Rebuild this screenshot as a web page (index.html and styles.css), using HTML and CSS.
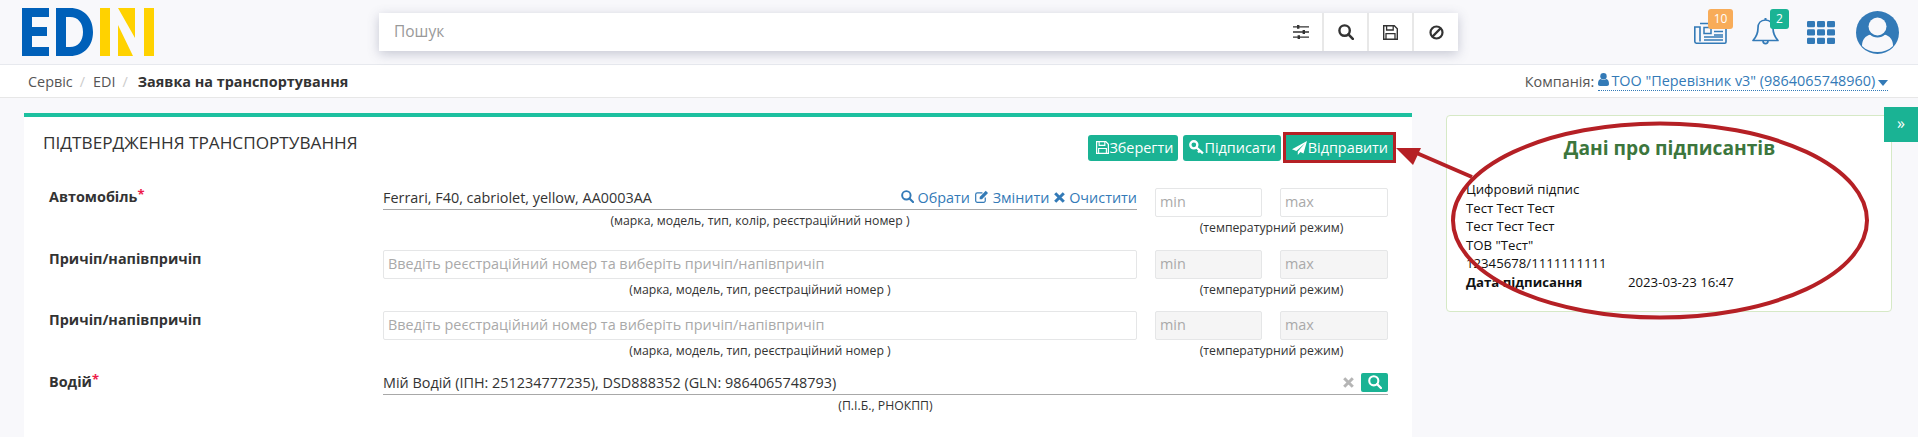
FILE: index.html

```html
<!DOCTYPE html>
<html lang="uk">
<head>
<meta charset="UTF-8">
<title>EDIN - Заявка на транспортування</title>
<link rel="stylesheet" href="styles.css">
</head>
<body>

<header class="topbar">
  <svg class="logo" width="132" height="48" viewBox="0 0 132 48">
    <path fill="#0060b9" d="M0 0h27v9H10v10h15v9H10v11h17v9H0z"/>
    <path fill="#0060b9" fill-rule="evenodd" d="M34 0h14c14 0 23 10 23 24s-9 24-23 24H34zM44 9v30h4c8 0 13-6 13-15S56 9 48 9z"/>
    <path fill="#ffd200" d="M78 0h10v48H78zM96 0h17v30zM96 17l15 31H96zM122 0h10v48h-10z"/>
  </svg>
  <div class="search">
    <span class="search-text">Пошук</span>
    <span class="search-tool first">
      <svg width="16" height="14" viewBox="0 0 16 14"><path fill="#333" d="M0 1.200h16v1.400H0zM0 6.300h16v1.400H0zM0 11.400h16v1.400H0z"/><path fill="#333" d="M4 0h2.400v3.800H4zM9.600 5.100H12v3.800H9.600zM4.600 10.200H7V14H4.600z"/></svg>
    </span>
    <span class="search-tool">
      <svg width="16" height="16" viewBox="0 0 16 16"><circle cx="6.600" cy="6.600" r="5.200" fill="none" stroke="#333" stroke-width="2.400"/><path d="M10.400 10.400l4.400 4.400" stroke="#333" stroke-width="2.600" stroke-linecap="round"/></svg>
    </span>
    <span class="search-tool">
      <svg width="15" height="15" viewBox="0 0 15 15"><path fill="none" stroke="#333" stroke-width="1.400" d="M.7.7h10.600l3 3v10.600H.7z"/><path fill="none" stroke="#333" stroke-width="1.300" d="M3.600 1v4h6.600V1M3 14.200V8.600h9v5.600"/></svg>
    </span>
    <span class="search-tool last">
      <svg width="15" height="15" viewBox="0 0 15 15"><circle cx="7.500" cy="7.500" r="6" fill="none" stroke="#333" stroke-width="2.200"/><path d="M3.400 11.600l8.200-8.200" stroke="#333" stroke-width="2.200"/></svg>
    </span>
  </div>
  <div class="top-icons">
    <span class="top-icon news">
      <svg width="33" height="23" viewBox="0 0 33 23"><path fill="none" stroke="#337ab7" stroke-width="1.600" d="M6 2.500h26v18.500a1.200 1.200 0 0 1-1.200 1.200H2.400A1.600 1.600 0 0 1 .8 20.600V6h5.200v14.500"/><path fill="none" stroke="#337ab7" stroke-width="1.500" d="M10 6.500h7v6h-7z"/><path stroke="#337ab7" stroke-width="1.600" d="M20 7h9M20 10.500h9M20 14h9M10 16h19M10 19h19"/></svg>
      <span class="badge badge-orange">10</span>
    </span>
    <span class="top-icon bell">
      <svg width="27" height="29" viewBox="0 0 27 29"><path fill="none" stroke="#337ab7" stroke-width="1.700" stroke-linejoin="round" d="M13.500 3c-4.800 0-7.500 3.400-7.500 8 0 6-2 9.300-5 12.500h25c-3-3.200-5-6.500-5-12.500 0-4.600-2.700-8-7.500-8zM11 24c0 3.500 5 3.500 5 0"/><path stroke="#337ab7" stroke-width="2" d="M13.500 1v2"/></svg>
      <span class="badge badge-green">2</span>
    </span>
    <svg class="top-grid" width="28" height="23" viewBox="0 0 28 23">
      <g fill="#337ab7">
        <rect width="8" height="6.300" rx="1.300"/><rect x="10" width="8" height="6.300" rx="1.300"/><rect x="20" width="8" height="6.300" rx="1.300"/>
        <rect y="8.300" width="8" height="6.300" rx="1.300"/><rect x="10" y="8.300" width="8" height="6.300" rx="1.300"/><rect x="20" y="8.300" width="8" height="6.300" rx="1.300"/>
        <rect y="16.700" width="8" height="6.300" rx="1.300"/><rect x="10" y="16.700" width="8" height="6.300" rx="1.300"/><rect x="20" y="16.700" width="8" height="6.300" rx="1.300"/>
      </g>
    </svg>
    <svg class="avatar" width="43" height="43" viewBox="0 0 43 43">
      <circle cx="21.500" cy="21.500" r="21.500" fill="#337ab7"/>
      <path fill="#f8f8fb" d="M6 35c0-6 3-10.500 9-11.500h13c6 1 9 5.500 9 11.500-8 8-23 8-31 0z"/>
      <circle cx="21.500" cy="15.500" r="11" fill="#337ab7"/>
      <circle cx="21.500" cy="15.500" r="9" fill="#f8f8fb"/>
    </svg>
  </div>
</header>

<nav class="crumbs">
  <div class="crumb-path">
    <span>Сервіс</span><i>/</i><span>EDI</span><i>/</i><b>Заявка на транспортування</b>
  </div>
  <div class="company">
    <span>Компанія:</span>
    <a class="company-link">
      <svg class="company-user" width="11" height="13" viewBox="0 0 11 13"><circle cx="5.500" cy="3.200" r="3.200" fill="#337ab7"/><path fill="#337ab7" d="M0 11c0-3 1-4.800 2.800-5 1.500 1.200 3.900 1.200 5.400 0C10 6.200 11 8 11 11c0 1.300-.8 2-2 2H2c-1.200 0-2-.7-2-2z"/></svg>
      ТОО "Перевізник v3" (9864065748960)
      <svg class="company-caret" width="10" height="6" viewBox="0 0 10 6"><path fill="#337ab7" d="M0 0h10L5 6z"/></svg>
    </a>
  </div>
</nav>

<main class="content">
  <section class="card">
    <div class="card-head">
      <h2>Підтвердження транспортування</h2>
      <div class="actions">
        <button class="btn btn-save">
          <svg width="13" height="13" viewBox="0 0 15 15"><path fill="none" stroke="#fff" stroke-width="1.400" d="M.7.7h10.600l3 3v10.600H.7z"/><path fill="none" stroke="#fff" stroke-width="1.300" d="M3.600 1v4h6.600V1M3 14.200V8.600h9v5.600"/></svg>Зберегти
        </button>
        <button class="btn btn-sign">
          <svg width="15" height="15" viewBox="0 0 14 14"><circle cx="4.500" cy="4.500" r="3.300" fill="none" stroke="#fff" stroke-width="2.200"/><path d="M7 7l6 5.500M10 10l-1.500 1.700" stroke="#fff" stroke-width="2.200"/></svg>Підписати
        </button>
        <button class="btn btn-marked">
          <svg width="15" height="14" viewBox="0 0 15 14"><path fill="#fff" d="M15 0L0 8.200l4.300 1.700L13 2.200 5.800 10.500V14l2.600-2.900 3.100 1.400z"/></svg>Відправити
        </button>
      </div>
    </div>

    <div class="row">
      <label class="row-label">Автомобіль<sup>*</sup></label>
      <div class="cell">
        <div class="picked">
          <span class="picked-text">Ferrari, F40, cabriolet, yellow, AA0003AA</span>
          <a class="picked-link"><svg width="13" height="13" viewBox="0 0 16 16"><circle cx="6.600" cy="6.600" r="5.200" fill="none" stroke="#337ab7" stroke-width="2.400"/><path d="M10.400 10.400l4.400 4.400" stroke="#337ab7" stroke-width="2.600" stroke-linecap="round"/></svg> Обрати</a>
          <a class="picked-link"><svg width="14" height="13" viewBox="0 0 15 14"><path fill="none" stroke="#337ab7" stroke-width="1.300" d="M11 8v3.500a1.800 1.800 0 0 1-1.800 1.800H2.500A1.800 1.800 0 0 1 .7 11.500V4.800A1.800 1.800 0 0 1 2.500 3H8"/><path fill="#337ab7" d="M5 7.500L11.500.8l2.500 2.400L7.500 10H5z"/></svg> Змінити</a>
          <a class="picked-link"><svg width="11" height="11" viewBox="0 0 11 11"><path stroke="#337ab7" stroke-width="3" d="M1.200 1.200l8.600 8.600M9.800 1.200l-8.600 8.600"/></svg> Очистити</a>
        </div>
        <small class="hint">(марка, модель, тип, колір, реєстраційний номер )</small>
      </div>
      <div class="cell">
        <input class="box" placeholder="min">
        <small class="hint">(температурний режим)</small>
      </div>
      <div class="cell">
        <input class="box" placeholder="max">
      </div>
    </div>

    <div class="row">
      <label class="row-label">Причіп/напівпричіп</label>
      <div class="cell">
        <input class="box" placeholder="Введіть реєстраційний номер та виберіть причіп/напівпричіп">
        <small class="hint">(марка, модель, тип, реєстраційний номер )</small>
      </div>
      <div class="cell">
        <input class="box box-off" placeholder="min">
        <small class="hint">(температурний режим)</small>
      </div>
      <div class="cell">
        <input class="box box-off" placeholder="max">
      </div>
    </div>

    <div class="row">
      <label class="row-label">Причіп/напівпричіп</label>
      <div class="cell">
        <input class="box" placeholder="Введіть реєстраційний номер та виберіть причіп/напівпричіп">
        <small class="hint">(марка, модель, тип, реєстраційний номер )</small>
      </div>
      <div class="cell">
        <input class="box box-off" placeholder="min">
        <small class="hint">(температурний режим)</small>
      </div>
      <div class="cell">
        <input class="box box-off" placeholder="max">
      </div>
    </div>

    <div class="row">
      <label class="row-label">Водій<sup>*</sup></label>
      <div class="cell cell-wide">
        <div class="picked">
          <span class="picked-text">Мій Водій (ІПН: 251234777235), DSD888352 (GLN: 9864065748793)</span>
          <svg class="picked-clear" width="11" height="11" viewBox="0 0 11 11"><path stroke="#b5b5b5" stroke-width="3" d="M1.200 1.200l8.600 8.600M9.800 1.200l-8.600 8.600"/></svg>
          <span class="picked-find"><svg width="14" height="14" viewBox="0 0 16 16"><circle cx="6.600" cy="6.600" r="5.200" fill="none" stroke="#fff" stroke-width="2.400"/><path d="M10.400 10.400l4.400 4.400" stroke="#fff" stroke-width="2.600" stroke-linecap="round"/></svg></span>
        </div>
        <small class="hint">(П.І.Б., РНОКПП)</small>
      </div>
    </div>
  </section>

  <aside class="signers">
    <h3>Дані про підписантів</h3>
    <p>Цифровий підпис</p>
    <p>Тест Тест Тест</p>
    <p>Тест Тест Тест</p>
    <p>ТОВ "Тест"</p>
    <p>12345678/1111111111</p>
    <p class="signed"><b>Дата підписання</b><span>2023-03-23 16:47</span></p>
  </aside>
</main>

<button class="side-tab">»</button>

<svg class="callout" width="1918" height="437" viewBox="0 0 1918 437">
  <ellipse cx="1660" cy="220.500" rx="207" ry="97" fill="none" stroke="#b52025" stroke-width="4"/>
  <path d="M1472 177L1412 151" stroke="#b52025" stroke-width="4"/>
  <path fill="#b52025" d="M1396 148h25l-8 17z"/>
</svg>

</body>
</html>
```

FILE: styles.css

```css
* { box-sizing: border-box; }
html, body { height: 437px; overflow: hidden; }
body { margin: 0; background: #f8f8fb; color: #333; font-family: "Open Sans", sans-serif; font-size: 14.4px; }

.topbar { height: 65px; display: flex; align-items: flex-start; border-bottom: 1px solid #e7e9ee; position: relative; }
.logo { margin: 8px 0 0 22px; flex: none; }
.search { width: 1079px; height: 38px; margin: 13px 0 0 225px; background: #fff; display: flex; box-shadow: 0 3px 12px rgba(80, 85, 120, .3); }
.search-text { flex: 1; padding-left: 15px; font-size: 15.5px; line-height: 37px; color: #999; }
.search-tool { width: 45px; border-left: 2px solid #e8e8e8; display: flex; align-items: center; justify-content: center; }
.search-tool.first { border-left: 0; width: 42px; }
.search-tool.last { width: 46px; }
.top-icons { flex: 1; position: relative; }
.top-icon, .top-grid, .avatar { position: absolute; }
.top-icon.news { left: 236px; top: 21px; }
.top-icon.bell { left: 294px; top: 17px; }
.top-grid { left: 349px; top: 21px; }
.avatar { left: 398px; top: 11px; }
.top-icon svg { display: block; }
.badge { position: absolute; height: 20px; border-radius: 3px; color: #fff; font-size: 12px; line-height: 20px; text-align: center; }
.news .badge { left: 14px; width: 25px; top: -12px; }
.bell .badge { left: 18px; width: 19px; top: -8px; }
.badge-orange { background: #f8ac59; }
.badge-green { background: #1ab394; }

.crumbs { height: 33px; background: #fff; border-bottom: 1px solid #e7e7e7; display: flex; justify-content: space-between; align-items: center; padding: 0 30px 0 28px; }
.crumb-path { color: #555; }
.crumb-path i { font-style: normal; color: #ccc; margin: 0 8px 0 7px; }
.crumb-path b { color: #333; margin-left: 2px; }
.company { display: flex; gap: 4px; color: #555; }
.company-link { color: #337ab7; border-bottom: 1px dotted #337ab7; line-height: 18px; }
.company-user { margin-right: -1.5px; }
.company-caret { margin-left: -1px; }

.content { display: grid; grid-template-columns: 1388px 446px; column-gap: 34px; padding: 15px 0 0 24px; align-items: start; }
.card { background: #fff; border-top: 4px solid #1cc09f; height: 330px; padding: 15px 24px 0 19px; }
.card-head { display: flex; justify-content: space-between; height: 31px; margin-bottom: 25px; }
.card-head h2 { margin: 0; font-size: 17.2px; font-weight: 400; line-height: 21px; text-transform: uppercase; }
.actions { display: flex; align-items: center; gap: 5px; margin-right: -8px; }
.btn { height: 26px; padding: 0 5px 0 7px; border: 0; border-radius: 3px; background: #1ab394; color: #fff; font: 14.4px "Open Sans", sans-serif; display: flex; align-items: center; }
.btn-save { padding-left: 8px; }
.btn-sign { padding: 0 5px 0 6px; }
.btn-marked { height: 31px; margin-left: -3px; border: 3px solid #b52025; border-radius: 0; padding: 0 5px 0 6px; gap: 1px; }

.row { height: 61.5px; display: grid; grid-template-columns: 340px 754px 125px 126px; }
.row-label { margin-top: -1px; padding-left: 6px; font-weight: 700; line-height: 20px; }
.row-label sup { color: #ed1c4a; font-size: 13px; line-height: 0; vertical-align: 3px; }
.cell { display: flex; flex-direction: column; align-items: center; min-width: 0; }
.cell:nth-child(3) { margin-left: 18px; width: 107px; }
.cell:nth-child(4) { margin-left: 18px; width: 108px; }
.cell-wide { grid-column: 2 / 5; }
.hint { margin-top: 2px; font-size: 12.25px; line-height: 18px; color: #333; white-space: nowrap; }
.cell:nth-child(3) .hint { width: 233px; text-align: center; flex: none; align-self: flex-start; }
.box { width: 100%; height: 29px; flex: none; border: 1px solid #e5e6e7; border-radius: 2px; padding: 0 4px 2px; font: 14.4px "Open Sans", sans-serif; background: #fff; }
.box::placeholder { color: #a9a9a9; opacity: 1; }
.box-off { background: #f5f5f5; }

.picked { width: 100%; height: 22px; flex: none; border-bottom: 1px solid #a8a8a8; padding-bottom: 2px; display: flex; align-items: center; gap: 5px; }
.picked-text { flex: 1; white-space: nowrap; }
.picked-link { color: #337ab7; white-space: nowrap; }
.picked-clear { margin-right: 2px; }
.picked-find { width: 27px; height: 19px; background: #1ab394; border-radius: 2px; display: flex; align-items: center; justify-content: center; }

.signers { height: 197px; margin-top: 2px; background: #fff; border: 1px solid #d6e9c6; border-radius: 4px; padding: 0 18px 0 19px; }
.signers h3 { margin: 0; height: 64px; padding-top: 19px; font-size: 19.2px; line-height: 26px; font-weight: 700; text-align: center; color: #3c763d; }
.signers p { margin: 0; font-size: 13.2px; line-height: 18.6px; color: #111; }
.signed { display: grid; grid-template-columns: 162px 1fr; }

.side-tab { position: absolute; top: 107px; right: 0; width: 34px; height: 35px; padding: 0 0 3px; border: 0; background: #1ab394; color: #fff; font-size: 16px; font-family: "Open Sans", sans-serif; }
.callout { position: absolute; left: 0; top: 0; pointer-events: none; }
```
